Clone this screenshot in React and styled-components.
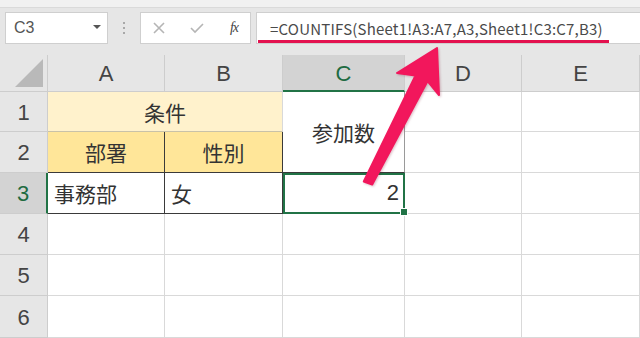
import React from 'react';
import styled, { createGlobalStyle } from 'styled-components';

const GlobalStyle = createGlobalStyle`
  html, body {
    margin: 0;
    padding: 0;
    background: #e6e6e6;
  }
  * {
    box-sizing: border-box;
  }
`;

const Page = styled.div`
  position: relative;
  width: 640px;
  height: 338px;
  overflow: hidden;
  background: #e6e6e6;
  font-family: "Noto Sans CJK JP", "Noto Sans", sans-serif;
`;

const TopStrip = styled.div`
  height: 8px;
  background: #f1f1f1;
  border-bottom: 1px solid #dadada;
`;

const FormulaBar = styled.div`
  display: flex;
  align-items: center;
  height: 47px;
  padding: 4px 0 11px 5px;
  background: #e6e6e6;
`;

const Box = styled.div`
  height: 32px;
  background: #fff;
  border: 1px solid #cfcfcf;
  display: flex;
  align-items: center;
`;

const NameBox = styled(Box)`
  width: 103px;
  padding: 0 6px 0 8px;
  justify-content: space-between;
  color: #555;
  font-family: "Liberation Sans", "Noto Sans", sans-serif;
  font-size: 16px;
`;

const Caret = styled.span`
  width: 0;
  height: 0;
  border-left: 4px solid transparent;
  border-right: 4px solid transparent;
  border-top: 4px solid #555;
  margin-bottom: 2px;
`;

const Grip = styled.div`
  width: 32px;
  display: flex;
  flex-direction: column;
  align-items: center;
  gap: 3px;
  span {
    width: 2px;
    height: 2px;
    background: #a8a8a8;
  }
`;

const FuncBox = styled(Box)`
  width: 111px;
  padding: 0 12px 0 12px;
  justify-content: space-between;
  color: #b8b8b8;
`;

const Fx = styled.span`
  font-family: "Liberation Serif", serif;
  font-style: italic;
  font-size: 14px;
  color: #444;
  letter-spacing: -1px;
`;

const FormulaBox = styled(Box)`
  flex: 1;
  margin-left: 5px;
  align-items: stretch;
  border-right: none;
`;

const FormulaText = styled.div`
  display: flex;
  align-items: center;
  padding: 3px 6px 0 12px;
  margin-left: 1px;
  border-bottom: 3px solid #e3124f;
  font-size: 15px;
  color: #4a4a4a;
  letter-spacing: 0.2px;
  white-space: nowrap;
`;

const Sheet = styled.div`
  display: grid;
  grid-template-columns: 48px 117px 118px 122px 117px 118px;
  grid-template-rows: 37px 40px 41px 41px 41px 41px 42px;
  background: #fff;
`;

const Head = styled.div`
  display: flex;
  align-items: center;
  justify-content: center;
  background: ${p => (p.$active ? '#d3d3d3' : '#e6e6e6')};
  color: ${p => (p.$active ? '#1e6b41' : '#444')};
  border-right: 1px solid ${p => (p.$row && p.$active ? '#217346' : '#cdcdcd')};
  border-bottom: 1px solid ${p => (!p.$row && p.$active ? '#217346' : '#cdcdcd')};
  ${p => p.$active && (p.$row ? 'border-right-width: 2px;' : 'border-bottom-width: 2px;')}
  font-family: "Liberation Sans", "Noto Sans", sans-serif;
  font-size: 22px;
  padding-top: 2px;
`;

const Corner = styled.div`
  position: relative;
  background: #e6e6e6;
  border-right: 1px solid #cdcdcd;
  border-bottom: 1px solid #cdcdcd;
  &::after {
    content: '';
    position: absolute;
    right: 4px;
    bottom: 4px;
    width: 0;
    height: 0;
    border-left: 28px solid transparent;
    border-bottom: 28px solid #b9b9b9;
  }
`;

const Cell = styled.div`
  position: relative;
  display: flex;
  align-items: center;
  justify-content: ${p => p.$align || 'flex-start'};
  padding: 0 6px;
  background: ${p => p.$bg || '#fff'};
  border-right: 1px solid ${p => p.$right || '#d9d9d9'};
  border-bottom: 1px solid ${p => p.$bottom || '#d9d9d9'};
  font-size: 21px;
  color: #333;
  ${p => p.$colSpan && `grid-column: span ${p.$colSpan};`}
  ${p => p.$rowSpan && `grid-row: span ${p.$rowSpan};`}
`;

const Selected = styled(Cell)`
  outline: 2px solid #217346;
  outline-offset: -2px;
  border-right: none;
  font-family: "Liberation Sans", sans-serif;
  font-size: 22px;
  &::after {
    content: '';
    position: absolute;
    right: -3px;
    bottom: -3px;
    width: 6px;
    height: 6px;
    background: #217346;
    border: 1px solid #fff;
    z-index: 2;
  }
`;

const Overlay = styled.svg`
  position: absolute;
  left: 0;
  top: 0;
  pointer-events: none;
  filter: drop-shadow(1px 1px 1px rgba(120, 0, 30, 0.25));
`;

const columns = ['A', 'B', 'C', 'D', 'E'];
const DARK = '#3a3a3a';

const EmptyRow = ({ n }) => (
  <>
    <Head $row>{n}</Head>
    {columns.map(c => (
      <Cell key={c} />
    ))}
  </>
);

export default function App() {
  return (
    <Page>
      <GlobalStyle />
      <TopStrip />
      <FormulaBar>
        <NameBox>
          C3
          <Caret />
        </NameBox>
        <Grip>
          <span />
          <span />
          <span />
        </Grip>
        <FuncBox>
          <svg width="12" height="12" viewBox="0 0 12 12">
            <path d="M1 1 L11 11 M11 1 L1 11" stroke="#b5b5b5" strokeWidth="1.6" />
          </svg>
          <svg width="14" height="12" viewBox="0 0 14 12">
            <path d="M1 6 L5 10 L13 2" stroke="#b5b5b5" strokeWidth="1.6" fill="none" />
          </svg>
          <Fx>fx</Fx>
        </FuncBox>
        <FormulaBox>
          <FormulaText>=COUNTIFS(Sheet1!A3:A7,A3,Sheet1!C3:C7,B3)</FormulaText>
        </FormulaBox>
      </FormulaBar>

      <Sheet>
        <Corner />
        {columns.map(c => (
          <Head key={c} $active={c === 'C'}>
            {c}
          </Head>
        ))}

        <Head $row>1</Head>
        <Cell $colSpan={2} $bg="#fff2cc" $align="center" $bottom="#c9c2a8">
          条件
        </Cell>
        <Cell $rowSpan={2} $align="center" $right="#9a9a9a" $bottom={DARK}>
          参加数
        </Cell>
        <Cell />
        <Cell />

        <Head $row>2</Head>
        <Cell $bg="#ffe699" $align="center" $right={DARK} $bottom={DARK}>
          部署
        </Cell>
        <Cell $bg="#ffe699" $align="center" $right={DARK} $bottom={DARK}>
          性別
        </Cell>
        <Cell />
        <Cell />

        <Head $row $active>3</Head>
        <Cell $right={DARK} $bottom={DARK}>事務部</Cell>
        <Cell $right={DARK} $bottom={DARK}>女</Cell>
        <Selected $align="flex-end">2</Selected>
        <Cell />
        <Cell />

        <EmptyRow n={4} />
        <EmptyRow n={5} />
        <EmptyRow n={6} />
      </Sheet>

      <Overlay width="640" height="338" viewBox="0 0 640 338">
        <polygon
          points="363.8,181.5 415.4,75.6 397,73 437,48 439,95 427.6,81 372.2,184.5"
          fill="#f2175c"
          stroke="#f2175c"
          strokeWidth="2"
          strokeLinejoin="round"
        />
      </Overlay>
    </Page>
  );
}
